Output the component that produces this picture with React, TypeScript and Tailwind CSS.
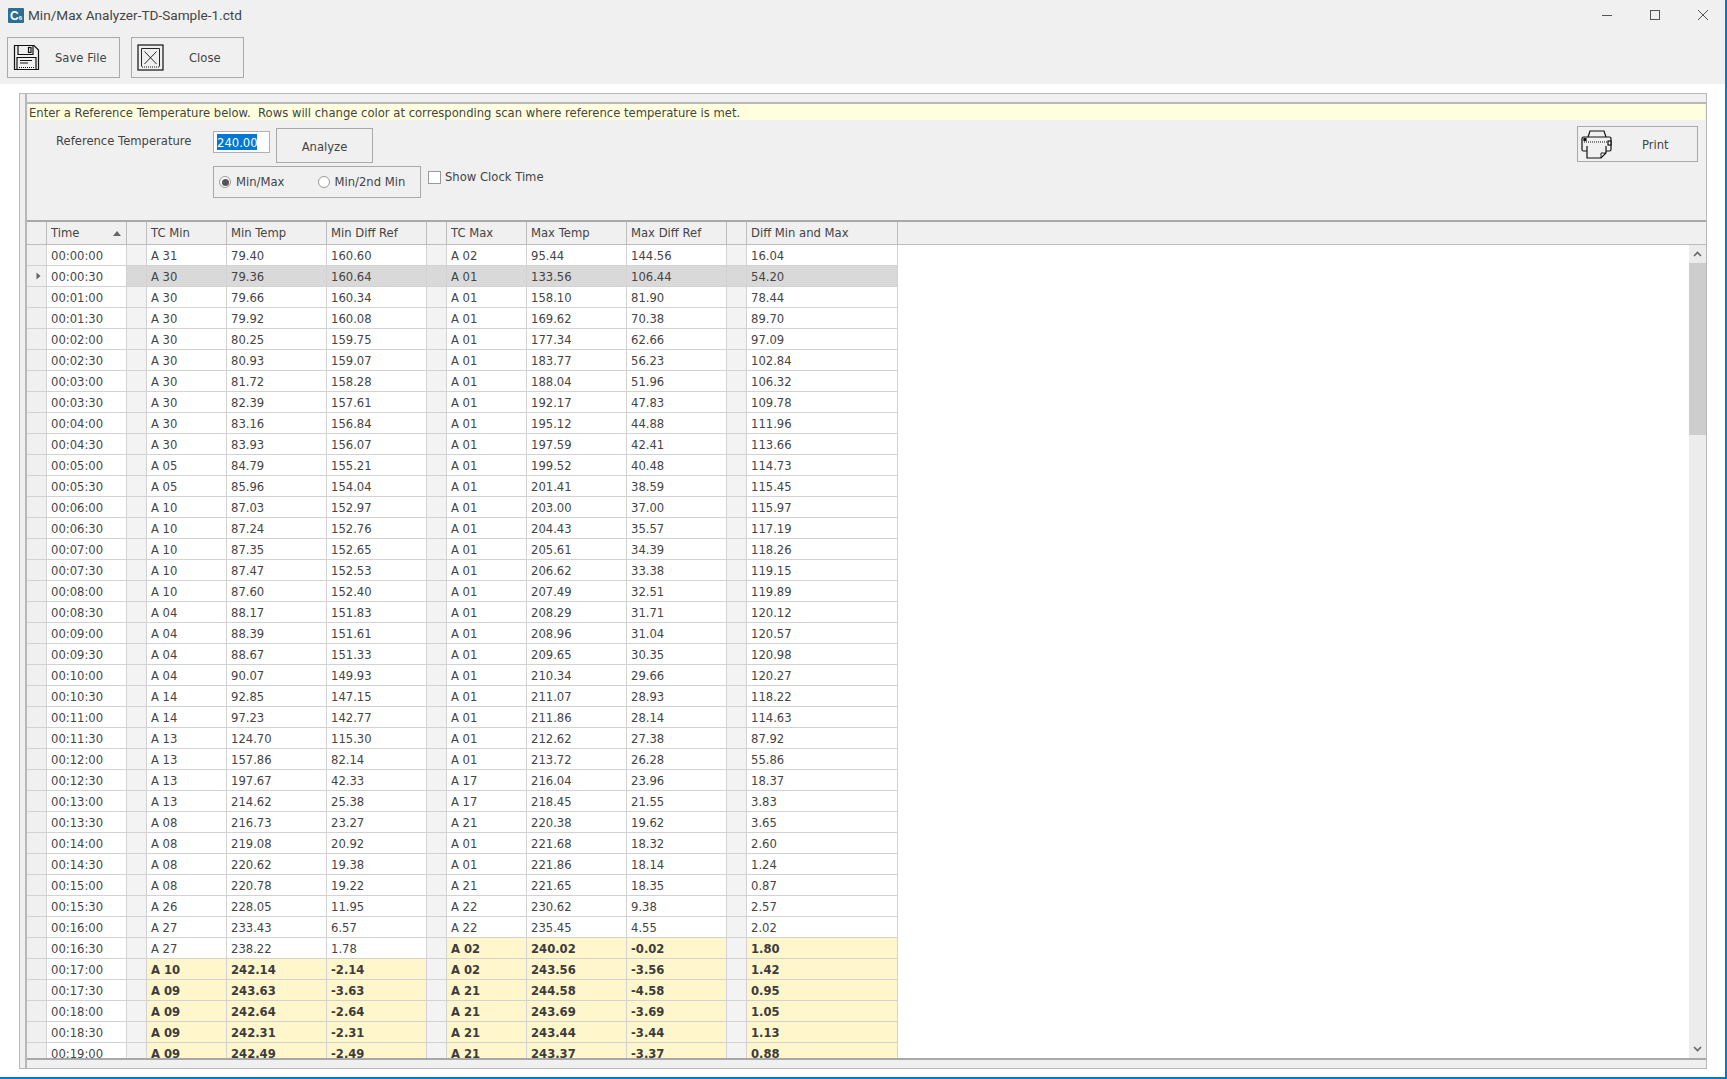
import React from 'react'

const rows: [string, string, string, string, string, string, string, string][] = [
  ['00:00:00', 'A 31', '79.40', '160.60', 'A 02', '95.44', '144.56', '16.04'],
  ['00:00:30', 'A 30', '79.36', '160.64', 'A 01', '133.56', '106.44', '54.20'],
  ['00:01:00', 'A 30', '79.66', '160.34', 'A 01', '158.10', '81.90', '78.44'],
  ['00:01:30', 'A 30', '79.92', '160.08', 'A 01', '169.62', '70.38', '89.70'],
  ['00:02:00', 'A 30', '80.25', '159.75', 'A 01', '177.34', '62.66', '97.09'],
  ['00:02:30', 'A 30', '80.93', '159.07', 'A 01', '183.77', '56.23', '102.84'],
  ['00:03:00', 'A 30', '81.72', '158.28', 'A 01', '188.04', '51.96', '106.32'],
  ['00:03:30', 'A 30', '82.39', '157.61', 'A 01', '192.17', '47.83', '109.78'],
  ['00:04:00', 'A 30', '83.16', '156.84', 'A 01', '195.12', '44.88', '111.96'],
  ['00:04:30', 'A 30', '83.93', '156.07', 'A 01', '197.59', '42.41', '113.66'],
  ['00:05:00', 'A 05', '84.79', '155.21', 'A 01', '199.52', '40.48', '114.73'],
  ['00:05:30', 'A 05', '85.96', '154.04', 'A 01', '201.41', '38.59', '115.45'],
  ['00:06:00', 'A 10', '87.03', '152.97', 'A 01', '203.00', '37.00', '115.97'],
  ['00:06:30', 'A 10', '87.24', '152.76', 'A 01', '204.43', '35.57', '117.19'],
  ['00:07:00', 'A 10', '87.35', '152.65', 'A 01', '205.61', '34.39', '118.26'],
  ['00:07:30', 'A 10', '87.47', '152.53', 'A 01', '206.62', '33.38', '119.15'],
  ['00:08:00', 'A 10', '87.60', '152.40', 'A 01', '207.49', '32.51', '119.89'],
  ['00:08:30', 'A 04', '88.17', '151.83', 'A 01', '208.29', '31.71', '120.12'],
  ['00:09:00', 'A 04', '88.39', '151.61', 'A 01', '208.96', '31.04', '120.57'],
  ['00:09:30', 'A 04', '88.67', '151.33', 'A 01', '209.65', '30.35', '120.98'],
  ['00:10:00', 'A 04', '90.07', '149.93', 'A 01', '210.34', '29.66', '120.27'],
  ['00:10:30', 'A 14', '92.85', '147.15', 'A 01', '211.07', '28.93', '118.22'],
  ['00:11:00', 'A 14', '97.23', '142.77', 'A 01', '211.86', '28.14', '114.63'],
  ['00:11:30', 'A 13', '124.70', '115.30', 'A 01', '212.62', '27.38', '87.92'],
  ['00:12:00', 'A 13', '157.86', '82.14', 'A 01', '213.72', '26.28', '55.86'],
  ['00:12:30', 'A 13', '197.67', '42.33', 'A 17', '216.04', '23.96', '18.37'],
  ['00:13:00', 'A 13', '214.62', '25.38', 'A 17', '218.45', '21.55', '3.83'],
  ['00:13:30', 'A 08', '216.73', '23.27', 'A 21', '220.38', '19.62', '3.65'],
  ['00:14:00', 'A 08', '219.08', '20.92', 'A 01', '221.68', '18.32', '2.60'],
  ['00:14:30', 'A 08', '220.62', '19.38', 'A 01', '221.86', '18.14', '1.24'],
  ['00:15:00', 'A 08', '220.78', '19.22', 'A 21', '221.65', '18.35', '0.87'],
  ['00:15:30', 'A 26', '228.05', '11.95', 'A 22', '230.62', '9.38', '2.57'],
  ['00:16:00', 'A 27', '233.43', '6.57', 'A 22', '235.45', '4.55', '2.02'],
  ['00:16:30', 'A 27', '238.22', '1.78', 'A 02', '240.02', '-0.02', '1.80'],
  ['00:17:00', 'A 10', '242.14', '-2.14', 'A 02', '243.56', '-3.56', '1.42'],
  ['00:17:30', 'A 09', '243.63', '-3.63', 'A 21', '244.58', '-4.58', '0.95'],
  ['00:18:00', 'A 09', '242.64', '-2.64', 'A 21', '243.69', '-3.69', '1.05'],
  ['00:18:30', 'A 09', '242.31', '-2.31', 'A 21', '243.44', '-3.44', '1.13'],
  ['00:19:00', 'A 09', '242.49', '-2.49', 'A 21', '243.37', '-3.37', '0.88'],
]

const gridCols = 'grid grid-cols-[20px_80px_20px_80px_100px_100px_20px_80px_100px_100px_20px_151px]'

const SaveIcon = () => (
  <svg width="27" height="27" viewBox="0 0 27 27" fill="none" stroke="#111" strokeWidth="1.2">
    <path d="M1.5 1.5H21L25.5 6V25.5H1.5Z" />
    <path d="M5 1.5V10.5H20V1.5" />
    <rect x="15.5" y="3.5" width="2.5" height="5" />
    <path d="M4 25.5V13.5H23V25.5" />
    <path d="M7 16.5H19M7 19H15" />
    <path d="M6 23.5H21.5" strokeDasharray="1 1" />
  </svg>
)

const CloseIcon = () => (
  <svg width="27" height="27" viewBox="0 0 27 27" fill="none" stroke="#111" strokeWidth="1.2">
    <rect x="1" y="1" width="25" height="25" />
    <path d="M4.5 22.5V4.5H22.5V22.5" strokeWidth="0.9" />
    <path d="M7.5 7.5L19.5 20M19.5 7.5L7.5 20" strokeWidth="0.9" />
    <path d="M5 23H22" strokeDasharray="1 1" />
  </svg>
)

const PrintIcon = () => (
  <svg width="31" height="29" viewBox="0 0 31 29" fill="none" stroke="#111" strokeWidth="1.2">
    <path d="M7 7L9 1H23L25 7" />
    <path d="M6 21H2.5Q1 21 1 19.5V8.5Q1 7 2.5 7H28.5Q30 7 30 8.5V19.5Q30 21 28.5 21H25" />
    <path d="M6 16V28H20L25 23V16" />
    <path d="M20 28V23H25" strokeWidth="0.9" />
    <path d="M3 12H27" strokeDasharray="1 1" />
    <rect x="3" y="8.5" width="2" height="2" fill="#111" />
    <rect x="27" y="11" width="3" height="4" fill="#f0f0f0" />
  </svg>
)

const Cell = ({ children, bold, bg }: { children?: React.ReactNode; bold?: boolean; bg: string }) => (
  <div className={`h-[21px] border-r border-b border-[#d2d2d2] pl-[4px] leading-[22px] whitespace-nowrap ${bg} ${bold ? 'font-bold text-[#3c3c3c]' : ''}`}>
    {children}
  </div>
)

const Blank = ({ bg = 'bg-[#f3f3f3]' }: { bg?: string }) => (
  <div className={`h-[21px] border-r border-b border-[#d2d2d2] ${bg}`} />
)

const HeadCell = ({ children }: { children?: React.ReactNode }) => (
  <div className="relative h-[22px] border-r border-[#bdbdbd] pl-[4px] leading-[23px]">{children}</div>
)

const Row = ({ row, index }: { row: (typeof rows)[number]; index: number }) => {
  const selected = index === 1
  const minHit = parseFloat(row[2]) >= 240
  const maxHit = parseFloat(row[5]) >= 240
  const normal = selected ? 'bg-[#d9d9d9]' : 'bg-white'
  const minBg = minHit ? 'bg-[#fff6cc]' : normal
  const maxBg = maxHit ? 'bg-[#fff6cc]' : normal
  const gap = selected ? 'bg-[#d9d9d9]' : 'bg-[#f3f3f3]'

  return (
    <div className={gridCols}>
      <div className="flex h-[21px] items-center justify-center border-r border-b border-[#d2d2d2] bg-[#f0f0f0]">
        {selected && (
          <svg width="5" height="8" viewBox="0 0 5 8" className="ml-[3px]">
            <path d="M0.5 0.5L4.5 4L0.5 7.5Z" fill="#666" />
          </svg>
        )}
      </div>
      <Cell bg="bg-white">{row[0]}</Cell>
      <Blank bg={gap} />
      <Cell bg={minBg} bold={minHit}>{row[1]}</Cell>
      <Cell bg={minBg} bold={minHit}>{row[2]}</Cell>
      <Cell bg={minBg} bold={minHit}>{row[3]}</Cell>
      <Blank bg={gap} />
      <Cell bg={maxBg} bold={maxHit}>{row[4]}</Cell>
      <Cell bg={maxBg} bold={maxHit}>{row[5]}</Cell>
      <Cell bg={maxBg} bold={maxHit}>{row[6]}</Cell>
      <Blank bg={gap} />
      <Cell bg={maxBg} bold={maxHit}>{row[7]}</Cell>
    </div>
  )
}

export default function App() {
  return (
    <div className="flex h-[1079px] w-[1727px] flex-col overflow-hidden border-r-2 border-b-2 border-[#0078d7] bg-white font-['DejaVu_Sans',sans-serif] text-[11.6px] text-[#444]">
      {/* Title bar */}
      <div className="flex h-[30px] shrink-0 items-center bg-[#f0f0f0] pl-[8px] text-[#444]">
        <div className="flex h-[15px] w-[16px] items-end justify-center rounded-[1px] bg-[#2a6f94] pb-[1px] font-['Liberation_Sans',sans-serif] font-bold leading-none text-white">
          <span className="text-[12px] leading-[12px]">C</span>
          <span className="text-[6px] leading-[7px]">6</span>
        </div>
        <span className="ml-[4px] pt-[1px] font-['Roboto',sans-serif] text-[13.6px]">Min/Max Analyzer-TD-Sample-1.ctd</span>
        <div className="ml-auto flex items-center gap-[38px] pr-[17px]">
          <svg width="10" height="10" viewBox="0 0 10 10" stroke="#555" strokeWidth="1"><path d="M0 5.5H10" /></svg>
          <svg width="10" height="10" viewBox="0 0 10 10" fill="none" stroke="#555" strokeWidth="1"><rect x="0.5" y="0.5" width="9" height="9" /></svg>
          <svg width="10" height="10" viewBox="0 0 10 10" stroke="#555" strokeWidth="1"><path d="M0 0L10 10M10 0L0 10" /></svg>
        </div>
      </div>

      {/* Toolbar */}
      <div className="flex h-[54px] shrink-0 items-start gap-[11px] bg-[#f0f0f0] pt-[7px] pl-[7px]">
        <button className="flex h-[41px] w-[113px] items-center border border-[#a9a9a9] pl-[5px]">
          <SaveIcon />
          <span className="ml-[15px] pt-[2px]">Save File</span>
        </button>
        <button className="flex h-[41px] w-[113px] items-center border border-[#a9a9a9] pl-[5px]">
          <CloseIcon />
          <span className="ml-[25px] pt-[2px]">Close</span>
        </button>
      </div>

      {/* Main panel */}
      <div className="flex min-h-0 flex-1 pt-[9px] pr-[18px] pb-[8px] pl-[19px]">
        <div className="flex min-w-0 flex-1 border border-[#b8b8b8] bg-[#f0f0f0]">
          <div className="w-[7px] shrink-0 border-r-2 border-[#b8b8b8]" />
          <div className="flex min-w-0 flex-1 flex-col">
            <div className="h-[10px] shrink-0 border-b-2 border-[#b8b8b8]" />

            {/* Reference temperature form */}
            <div className="h-[116px] shrink-0">
              <div className="mr-px ml-[1px] h-[16px] bg-[#ffffe0] pl-[1px] leading-[18px]">
                Enter a Reference Temperature below.&nbsp; Rows will change color at corresponding scan where reference temperature is met.
              </div>
              <div className="flex items-start pr-[8px] pl-[29px]">
                <span className="mt-[11px] w-[157px] leading-[20px]">Reference Temperature</span>
                <div className="mt-[8px] flex flex-col gap-[3px]">
                  <div className="flex items-start">
                    <div className="mt-[3px] h-[22px] w-[57px] border border-[#b0b0b0] bg-white pt-[2px] pl-[3px]">
                      <span className="block h-[16px] w-[40px] bg-[#0078d7] text-center leading-[18px] text-white">240.00</span>
                    </div>
                    <button className="ml-[6px] h-[35px] w-[97px] border border-[#a9a9a9] pt-[4px]">Analyze</button>
                  </div>
                  <div className="flex h-[32px] w-[208px] items-center border border-[#a9a9a9] pl-[5px]">
                    <span className="flex h-[12px] w-[12px] items-center justify-center rounded-full border border-[#999] bg-white">
                      <span className="h-[7px] w-[7px] rounded-full bg-[#555]" />
                    </span>
                    <span className="ml-[5px] pt-[2px]">Min/Max</span>
                    <span className="ml-[34px] h-[12px] w-[12px] rounded-full border border-[#999] bg-white" />
                    <span className="ml-[4px] pt-[2px]">Min/2nd Min</span>
                  </div>
                </div>
                <div className="mt-[48px] ml-[7px] flex items-center">
                  <span className="h-[13px] w-[13px] border border-[#999] bg-white" />
                  <span className="ml-[4px] pt-[1px]">Show Clock Time</span>
                </div>
                <button className="mt-[6px] ml-auto flex h-[36px] w-[121px] items-center border border-[#a9a9a9] pl-[3px]">
                  <PrintIcon />
                  <span className="ml-[30px] pt-[4px]">Print</span>
                </button>
              </div>
            </div>

            {/* Data grid */}
            <div className="flex min-h-0 flex-1 flex-col border-t-2 border-[#a8a8a8]">
              <div className="flex h-[23px] shrink-0 border-b border-[#bdbdbd]">
                <div className={gridCols}>
                  <HeadCell />
                  <HeadCell>
                    Time
                    <svg width="8" height="5" viewBox="0 0 8 5" className="absolute top-[9px] right-[5px]">
                      <path d="M4 0L8 5H0Z" fill="#666" />
                    </svg>
                  </HeadCell>
                  <HeadCell />
                  <HeadCell>TC Min</HeadCell>
                  <HeadCell>Min Temp</HeadCell>
                  <HeadCell>Min Diff Ref</HeadCell>
                  <HeadCell />
                  <HeadCell>TC Max</HeadCell>
                  <HeadCell>Max Temp</HeadCell>
                  <HeadCell>Max Diff Ref</HeadCell>
                  <HeadCell />
                  <HeadCell>Diff Min and Max</HeadCell>
                </div>
              </div>
              <div className="flex min-h-0 flex-1 border-b-2 border-[#a8a8a8] bg-white">
                <div className="min-w-0 flex-1 overflow-hidden">
                  {rows.map((row, i) => (
                    <Row key={row[0]} row={row} index={i} />
                  ))}
                </div>
                <div className="flex w-[17px] shrink-0 flex-col bg-[#ececec]">
                  <div className="flex h-[18px] items-center justify-center">
                    <svg width="9" height="6" viewBox="0 0 9 6" fill="none" stroke="#666" strokeWidth="1.6"><path d="M1 5L4.5 1.5L8 5" /></svg>
                  </div>
                  <div className="h-[172px] bg-[#cdcdcd]" />
                  <div className="flex-1" />
                  <div className="flex h-[18px] items-center justify-center">
                    <svg width="9" height="6" viewBox="0 0 9 6" fill="none" stroke="#666" strokeWidth="1.6"><path d="M1 1L4.5 4.5L8 1" /></svg>
                  </div>
                </div>
              </div>
              <div className="h-[8px] shrink-0" />
            </div>
          </div>
        </div>
      </div>
    </div>
  )
}
